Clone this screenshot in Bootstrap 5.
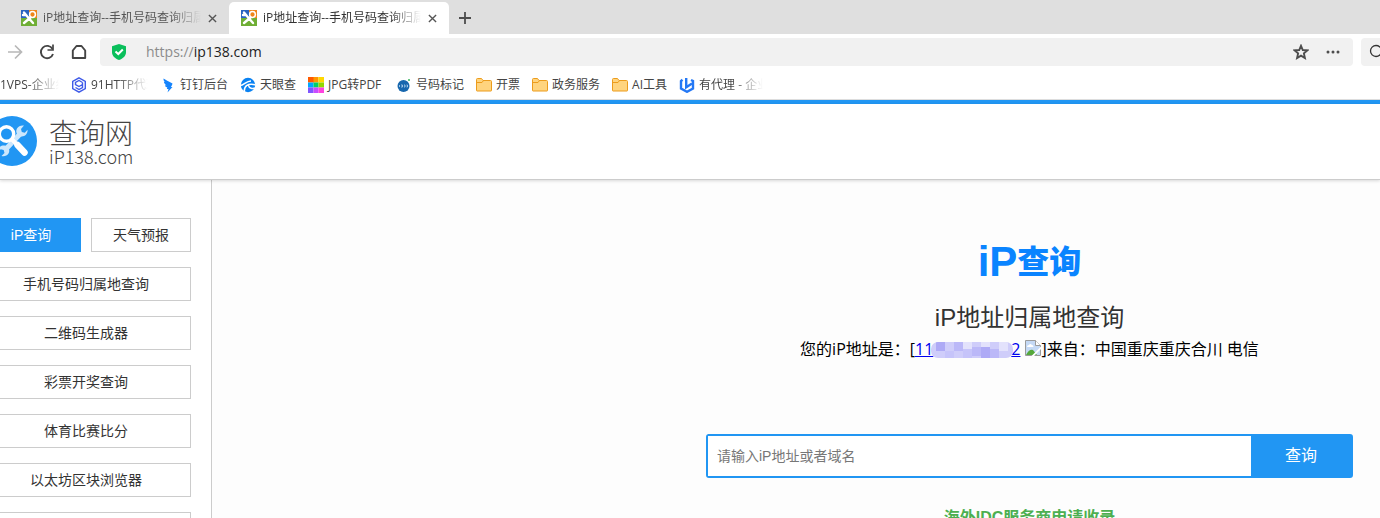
<!DOCTYPE html>
<html lang="zh-CN">
<head>
<meta charset="utf-8">
<meta name="viewport" content="width=device-width, initial-scale=1">
<title>iP地址查询--手机号码查询归属地</title>
<link href="https://cdn.jsdelivr.net/npm/bootstrap@5.3.0/dist/css/bootstrap.min.css" rel="stylesheet">
<style>
:root { --ui: "Open Sans", "Noto Sans CJK SC", sans-serif; --site: "Liberation Sans", "Noto Sans CJK SC", sans-serif; --brand: #2196f3; }
body { font-family: var(--site); font-size: 14px; line-height: 20px; color: #333; background: #fff; }
svg { display: block; flex: none; }
button { font-family: inherit; }
.icon-btn { border: 0; padding: 0; background: none; color: #4d4d4d; }
.chrome { font-family: var(--ui); font-size: 12px; white-space: nowrap; }
.tabstrip { height: 34px; background: #dfdfdf; padding: 2px 0 0 9px; }
.tab-item { width: 220px; height: 32px; padding: 0 12px; gap: 6px; color: #555; border-radius: 5px 5px 0 0; }
.tab-item.current { background: #fff; color: #333; }
.tab-title { width: 158px; }
.fade-end { overflow: hidden; -webkit-mask-image: linear-gradient(to right, #000 calc(100% - 32px), transparent); mask-image: linear-gradient(to right, #000 calc(100% - 32px), transparent); }
.toolbar { height: 36px; padding-left: 7px; }
.nav-tools { width: 93px; gap: 16px; }
.address { height: 28px; background: #f1f1f1; border-radius: 4px; padding: 0 12px 0 11px; }
.address .url { font-size: 14px; color: #222; margin-left: 19px; }
.address .scheme { color: #8c8c8c; }
.side-search { width: 19px; height: 28px; background: #f1f1f1; border-radius: 4px 0 0 4px; padding-left: 8px; margin-left: 8px; overflow: hidden; }
.bookmarks { height: 30px; gap: 12px; border-bottom: 1px solid #ddd; }
.bookmarks a { color: #444; gap: 4px; }
.bk-first { width: 59px; } .bk-cut { width: 57px; } .bk-last { width: 64px; } .bk-latin { width: 56px; }
.site-header { height: 76px; border-bottom: 1px solid #ccc; box-shadow: 0 1px 3px rgba(0,0,0,.15); background: #fff; position: relative; z-index: 1; padding-bottom: 2px; }
.top-rule { height: 4px; background: var(--brand); }
.brand-link { color: #444; gap: 11px; font-family: "Noto Sans CJK SC", sans-serif; font-weight: 300; }
.brand-link .zh { font-size: 28px; line-height: 30px; }
.brand-link .en { font-size: 18px; line-height: 18px; }
.side { width: 212px; border-right: 1px solid #ccc; padding: 38px 20px 0 0; }
.side-menu { width: 210px; display: grid; grid-template-columns: 1fr 1fr; gap: 15px 10px; }
.side-menu a { height: 34px; line-height: 32px; border: 1px solid #ccc; text-align: center; color: #333; text-decoration: none; }
.side-menu .wide { grid-column: span 2; }
.side-menu .on { background: var(--brand); border-color: var(--brand); color: #fff; }
.main-area { background: #fdfdfd; padding: 61px 27px 0; }
.query { max-width: 647px; }
.wordmark { color: #0a84ff; font-size: 42px; line-height: 42px; font-weight: 700; height: 42px; }
.wordmark .zh { font-size: 32px; font-weight: 900; }
.sub { font-size: 24px; line-height: 32px; font-weight: 400; margin: 19px 0 0; }
.result { font-family: var(--ui); font-size: 16px; line-height: 24px; color: #000; margin: 3px 0 0; white-space: nowrap; }
.result a { color: #00e; }
.result svg { display: inline-block; }
.mosaic { margin: 0 -2px; vertical-align: -3px; position: relative; }
.broken { vertical-align: -1px; margin-left: 5px; }
.search { height: 44px; margin-top: 73px; border: 2px solid var(--brand); border-radius: 3px; background: #fff; }
.search input { border: 0; padding: 0 9px; font-size: 14px; color: #333; outline: 0; background: #fff; }
.search input::placeholder { color: #777; opacity: 1; }
.search button { width: 100px; border: 0; background: var(--brand); color: #fff; font-size: 16px; }
.promo { color: #4caf50; font-size: 16px; font-weight: 700; line-height: 24px; margin-top: 28px; }
</style>
</head>
<body class="vh-100 overflow-hidden d-flex flex-column">
<svg width="0" height="0" class="position-absolute" aria-hidden="true">
  <symbol id="favicon" viewBox="0 0 16 16"><path fill="#2b64c0" d="M0 0h8v8H0z"/><path fill="#f08519" d="M8 0h8v8H8z"/><path fill="#6fae35" d="M0 8h16v8H0z"/><path d="M3 2.500l2.500 3M2 5h3M5 5l7 8M9.500 7.500 3 13" stroke="#fff" stroke-width="2.400" stroke-linecap="round"/><circle cx="11.500" cy="4.500" r="2.900" fill="#f08519" stroke="#fff" stroke-width="1.500"/></symbol>
  <symbol id="close" viewBox="0 0 10 10"><path d="M1 1l8 8M9 1 1 9" stroke="#555" stroke-width="1.500"/></symbol>
  <symbol id="folder" viewBox="0 0 16 16"><path d="M.500 13.500v-11q0-1 1-1h4l1.500 2h7.500q1 0 1 1v9q0 .500-.500.500H1q-.500 0-.500-.500z" fill="#ffd47e" stroke="#ec9c1c"/><path d="M1 5.500h5l1.500-2" fill="none" stroke="#ec9c1c"/></symbol>
</svg>

<div class="chrome flex-shrink-0">
  <div class="tabstrip d-flex">
    <div class="tab-item d-flex align-items-center">
      <svg width="16" height="16"><use href="#favicon"/></svg>
      <span class="tab-title fade-end">iP地址查询--手机号码查询归属地</span>
      <button class="icon-btn ms-auto" aria-label="关闭"><svg width="9" height="9"><use href="#close"/></svg></button>
    </div>
    <div class="tab-item current d-flex align-items-center">
      <svg width="16" height="16"><use href="#favicon"/></svg>
      <span class="tab-title fade-end">iP地址查询--手机号码查询归属地</span>
      <button class="icon-btn ms-auto" aria-label="关闭"><svg width="9" height="9"><use href="#close"/></svg></button>
    </div>
    <button class="icon-btn ms-2 px-0 align-self-center" aria-label="新标签页"><svg class="mx-auto" width="16" height="12" viewBox="-2 0 16 12"><path d="M6 0v12M0 6h12" stroke="#4d4d4d" stroke-width="1.800"/></svg></button>
  </div>

  <div class="toolbar d-flex align-items-center">
    <div class="nav-tools d-flex align-items-center">
      <button class="icon-btn" aria-label="前进"><svg width="16" height="16" viewBox="0 0 16 16" fill="none" stroke="#b8b8b8" stroke-width="1.700"><path d="M1 8h13M8 1.500 14.500 8 8 14.500"/></svg></button>
      <button class="icon-btn" aria-label="刷新"><svg width="16" height="16" viewBox="0 0 16 16" fill="none" stroke="#444" stroke-width="1.900"><path d="M13.500 5A6.200 6.200 0 1 0 14 10"/><path d="M14 .500V6H8.500" stroke-width="1.700"/></svg></button>
      <button class="icon-btn" aria-label="主页"><svg width="16" height="16" viewBox="0 0 16 16" fill="none" stroke="#444" stroke-width="1.900"><path d="M1.800 14V6.500L5.500 2h5l3.700 4.500V14z" stroke-linejoin="round"/></svg></button>
    </div>
    <div class="address flex-grow-1 d-flex align-items-center">
      <svg width="16" height="16" viewBox="0 0 16 16"><path d="M8 0l7 2.300V8c0 4-3 6.500-7 8-4-1.500-7-4-7-8V2.300z" fill="#0abf5b"/><path d="M4.500 7.500 7.300 10l4.500-4.500" fill="none" stroke="#fff" stroke-width="2"/></svg>
      <span class="url"><span class="scheme">https://</span>ip138.com</span>
      <button class="icon-btn ms-auto" aria-label="收藏"><svg width="16" height="16" viewBox="0 0 16 16" fill="none" stroke="#4d4d4d" stroke-width="1.900"><path d="M8 1.800l1.800 4.200 4.500.4-3.400 3 1 4.600L8 11.600 4.100 14l1-4.600-3.400-3L6.200 6z"/></svg></button>
      <button class="icon-btn ms-3" aria-label="更多"><svg width="16" height="16" viewBox="0 0 16 16" fill="#4d4d4d"><circle cx="3" cy="8" r="1.500"/><circle cx="8" cy="8" r="1.500"/><circle cx="13" cy="8" r="1.500"/></svg></button>
    </div>
    <div class="side-search d-flex align-items-center"><svg width="16" height="16" viewBox="0 0 16 16" fill="none" stroke="#333" stroke-width="1.300"><circle cx="7" cy="7" r="5.500"/><path d="M11 11l4 4"/></svg></div>
  </div>

  <nav class="bookmarks d-flex align-items-center">
    <a href="#" class="text-decoration-none bk-first fade-end">1VPS-企业级</a>
    <a href="#" class="text-decoration-none d-flex align-items-center"><svg width="16" height="16" viewBox="0 0 16 16" fill="none" stroke="#3f5be8" stroke-width="1.400"><path d="M8 .800l6.300 3.600v7.200L8 15.200l-6.300-3.600V4.400z"/><path d="M11.500 5.500v5L8 12.500l-3.500-2M11.500 7.500 8 9.500l-3.500-2v-2L8 3.500l3.500 2"/></svg><span class="bk-cut fade-end">91HTTP代理</span></a>
    <a href="#" class="text-decoration-none d-flex align-items-center"><svg width="16" height="16" viewBox="0 0 16 16"><path fill="#1684fc" d="M3.500 1.500c2 1.500 5 2.500 9 5-.3 1.500-1 2.700-1.600 3.500h1.600L7.500 15.500 8.500 12H6.800l.5-1.500C5.500 10 5 9 5 8.200l1.500.3C4.800 7.300 4 6 3.900 4.800l1 .3C3.800 4 3.400 3 3.500 1.500z"/></svg><span>钉钉后台</span></a>
    <a href="#" class="text-decoration-none d-flex align-items-center"><svg width="16" height="16" viewBox="0 0 16 16"><circle cx="8" cy="8" r="7.200" fill="#0a82f2"/><path d="M0 8.500C4 8.500 6 4 11 4M4.500 15.500C3.500 9 8 5.500 16 8M8.500 8.500c.5 3 4 3.500 7 2.500" fill="none" stroke="#fff" stroke-width="1.500"/></svg><span>天眼查</span></a>
    <a href="#" class="text-decoration-none d-flex align-items-center"><svg width="16" height="16" viewBox="0 0 16 16"><path fill="#ff5a00" d="M0 0h6v5.500H0z"/><path fill="#ff9600" d="M5.500 0h5v5.500h-5z"/><path fill="#ffd800" d="M10.500 0H16v5.500h-5.500z"/><path fill="#00a6ff" d="M0 5.500h5.500v5H0z"/><path fill="#00cf68" d="M5.500 5.500h5v5h-5z"/><path fill="#92d800" d="M10.500 5.500H16v5h-5.500z"/><path fill="#8056ff" d="M0 10.500h5.500V16H0z"/><path fill="#c94cff" d="M5.500 10.500h5V16h-5z"/><path fill="#ff42df" d="M10.500 10.500H16V16h-5.500z"/></svg><span class="bk-latin">JPG转PDF</span></a>
    <a href="#" class="text-decoration-none d-flex align-items-center"><svg width="16" height="16" viewBox="0 0 16 16"><circle cx="7.500" cy="9" r="6" fill="#1767ae"/><path d="M3.500 8v2M5 8h1.500v2H5M8 8h1v2H8M10.500 8h1v2h-1" fill="none" stroke="#cfe6f8" stroke-width=".7"/><circle cx="13" cy="3" r="1" fill="#36b45a"/></svg><span>号码标记</span></a>
    <a href="#" class="text-decoration-none d-flex align-items-center"><svg width="16" height="16"><use href="#folder"/></svg><span>开票</span></a>
    <a href="#" class="text-decoration-none d-flex align-items-center"><svg width="16" height="16"><use href="#folder"/></svg><span>政务服务</span></a>
    <a href="#" class="text-decoration-none d-flex align-items-center"><svg width="16" height="16"><use href="#folder"/></svg><span>AI工具</span></a>
    <a href="#" class="text-decoration-none d-flex align-items-center"><svg width="16" height="16" viewBox="0 0 16 16" fill="none" stroke="#2478f5" stroke-width="2.400"><path d="M3.500 2.800 2 4v7.500L8 14.800l6-3.300V4l-2-1"/><path d="M7.200 1v9.200L13 6.500"/></svg><span class="bk-last fade-end">有代理 - 企业</span></a>
  </nav>
</div>

<div class="top-rule flex-shrink-0"></div>
<header class="site-header flex-shrink-0 d-flex align-items-center">
  <a href="#" class="brand-link d-flex align-items-center text-decoration-none">
    <svg width="38" height="52" viewBox="12 0 38 52"><circle cx="24" cy="26" r="25" fill="#2196f3"/><path d="M17 35 33 18" stroke="#cde7fc" stroke-width="5"/><path d="M36 10.500 33 14l.8 3 3 .7 2.700-3c.5 4-2.500 7.300-6.500 6.800-4-.7-6-4.500-4-8 1.500-2.500 4-3.500 7-3zM13.500 41l3-3-.8-3-3-.7-2.700 2.700c-.5-4 2.500-7 6.500-6.500 4 .5 6 4.500 4 8-1.500 2.200-4 3.200-7 2.500z" fill="#cde7fc"/><circle cx="18.500" cy="19" r="7.200" fill="#2196f3" stroke="#fff" stroke-width="3.400"/><path d="M23.500 24 30 30.500" stroke="#fff" stroke-width="4"/><path d="M29.500 30l7 7.500" stroke="#fff" stroke-width="6.500" stroke-linecap="round"/></svg>
    <span class="d-flex flex-column"><span class="zh">查询网</span><span class="en">iP138.com</span></span>
  </a>
</header>

<div class="d-flex flex-grow-1">
  <aside class="side flex-shrink-0 d-flex justify-content-end">
    <nav class="side-menu flex-shrink-0 align-content-start">
      <a href="#" class="on">iP查询</a><a href="#">天气预报</a>
      <a href="#" class="wide">手机号码归属地查询</a>
      <a href="#" class="wide">二维码生成器</a>
      <a href="#" class="wide">彩票开奖查询</a>
      <a href="#" class="wide">体育比赛比分</a>
      <a href="#" class="wide">以太坊区块浏览器</a>
      <a href="#" class="wide" aria-label="更多查询"></a>
    </nav>
  </aside>
  <main class="main-area flex-grow-1">
    <div class="query ms-auto text-center">
      <div class="wordmark d-flex justify-content-center"><span>iP</span><span class="zh">查询</span></div>
      <h1 class="sub">iP地址归属地查询</h1>
      <p class="result">您的iP地址是：[<a href="#">11<svg class="mosaic" width="82" height="16" viewBox="0 0 82 16"><clipPath id="pill"><rect width="82" height="16" rx="7"/></clipPath><g clip-path="url(#pill)"><path fill="#cfcdfa" d="M0 0h82v16H0z"/><path fill="#aeaaf6" d="M5 0h9v9H5zM50 5h9v11h-9z"/><path fill="#bbb8f8" d="M23 0h9v9h-9zM41 5h9v9h-9zM59 7h9v9h-9z"/><path fill="#e3e2fc" d="M32 0h9v7h-9zM50 0h9v5h-9zM68 0h9v9h-9z"/><path fill="#c6c4fa" d="M14 9h9v7h-9zM32 7h9v9h-9z"/></g></svg>2</a><svg class="broken" width="16" height="16" viewBox="0 0 16 16"><path d="M.500.500h10l5 5v10H.500z" fill="#c5d9f5" stroke="#9b9b9b"/><path d="M10.500.500v5h5" fill="#fff" stroke="#9b9b9b"/><path d="M2 7q0-2 2-2 1-2 3 0 1.500 0 1.500 2z" fill="#fff"/><path d="M1 15q3-6 7-5l4 5z" fill="#55a83b"/><path d="M9 16l7-7v-2.500L6.500 16z" fill="#fff"/></svg>]来自：中国重庆重庆合川 电信</p>
      <form class="search d-flex" onsubmit="return false">
        <input class="flex-grow-1" type="text" aria-label="iP地址或者域名" placeholder="请输入iP地址或者域名">
        <button type="submit">查询</button>
      </form>
      <div class="promo">海外IDC服务商申请收录</div>
    </div>
  </main>
</div>
<script src="https://cdn.jsdelivr.net/npm/bootstrap@5.3.0/dist/js/bootstrap.bundle.min.js"></script>
</body>
</html>
